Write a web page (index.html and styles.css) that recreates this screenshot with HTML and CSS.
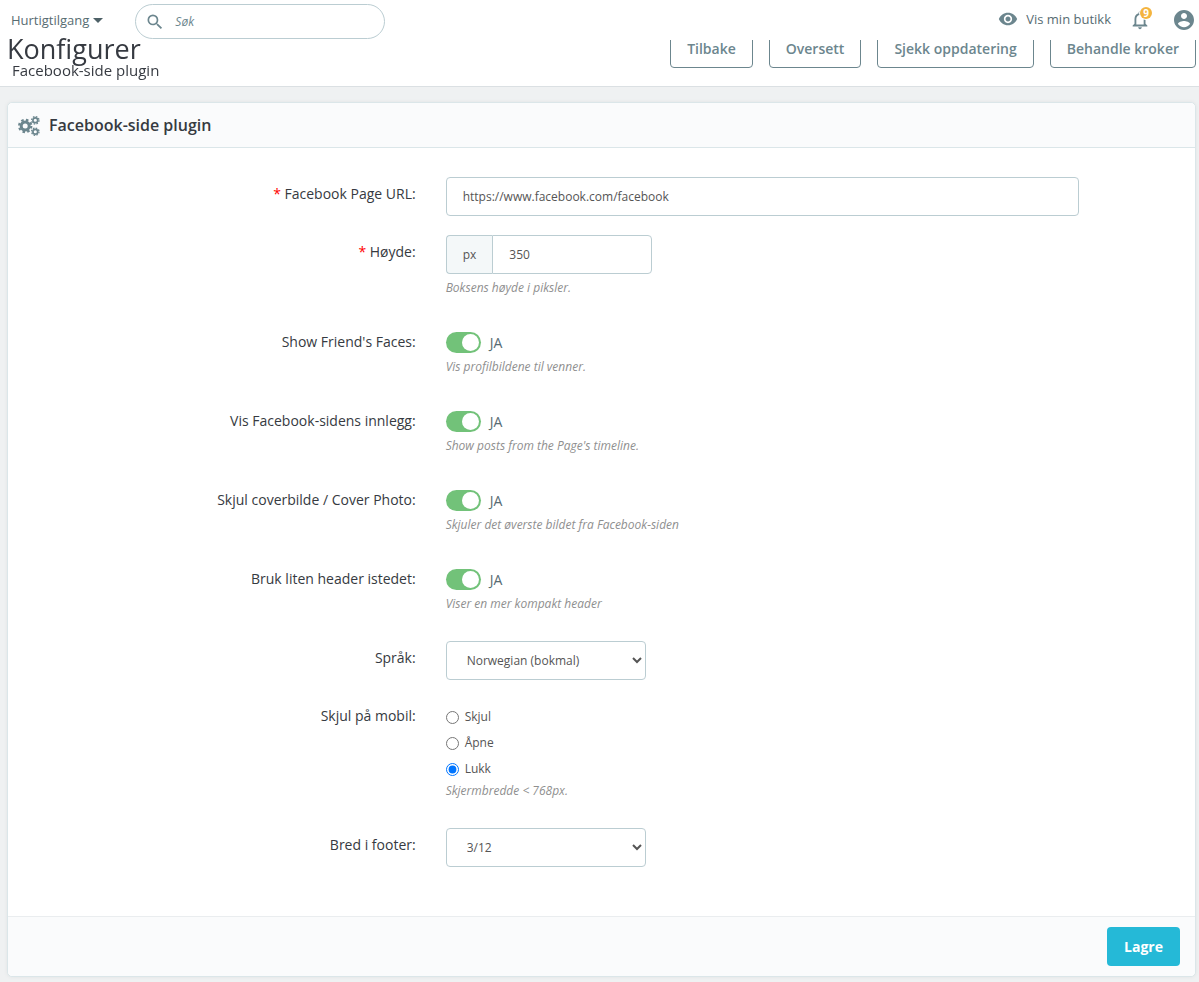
FILE: index.html
```html
<!DOCTYPE html>
<html lang="no">
<head>
  <meta charset="UTF-8">
  <meta name="viewport" content="width=device-width, initial-scale=1.0">
  <title>Konfigurer - Facebook-side plugin</title>
  <link rel="stylesheet" href="styles.css">
</head>
<body>
  <header class="topbar">
    <button type="button" class="quick-access">Hurtigtilgang <span class="caret"></span></button>
    <form class="search">
      <svg class="search-icon" viewBox="0 0 24 24"><path d="M15.5 14h-.79l-.28-.27A6.47 6.47 0 0 0 16 9.5 6.5 6.5 0 1 0 9.5 16c1.61 0 3.09-.59 4.23-1.57l.27.28v.79l5 4.99L20.49 19l-4.99-5zm-6 0C7.01 14 5 11.99 5 9.5S7.01 5 9.5 5 14 7.01 14 9.5 11.99 14 9.5 14z"/></svg>
      <input type="text" class="search-input" placeholder="Søk" aria-label="Søk">
    </form>
    <div class="topbar-right">
      <a class="shop-link" href="#">
        <svg class="icon-eye" viewBox="0 0 24 24"><path d="M12 4.5C7 4.5 2.73 7.61 1 12c1.73 4.39 6 7.5 11 7.5s9.27-3.11 11-7.5c-1.73-4.39-6-7.5-11-7.5zM12 17c-2.76 0-5-2.24-5-5s2.24-5 5-5 5 2.24 5 5-2.24 5-5 5zm0-8c-1.66 0-3 1.34-3 3s1.34 3 3 3 3-1.34 3-3-1.34-3-3-3z"/></svg>
        Vis min butikk
      </a>
      <button type="button" class="icon-button bell" aria-label="Varsler">
        <svg class="icon-bell" viewBox="0 0 24 24"><path d="M12 22c1.1 0 2-.9 2-2h-4c0 1.1.9 2 2 2zm6-6v-5c0-3.07-1.63-5.64-4.5-6.32V4c0-.83-.67-1.5-1.5-1.5s-1.5.67-1.5 1.5v.68C7.64 5.36 6 7.92 6 11v5l-2 2v1h16v-1l-2-2zm-2 1H8v-6c0-2.48 1.51-4.5 4-4.5s4 2.02 4 4.5v6z"/></svg>
        <span class="badge">9</span>
      </button>
      <button type="button" class="icon-button" aria-label="Konto">
        <svg class="icon-account" viewBox="0 0 24 24"><path d="M12 2C6.48 2 2 6.48 2 12s4.48 10 10 10 10-4.48 10-10S17.52 2 12 2zm0 3c1.66 0 3 1.34 3 3s-1.34 3-3 3-3-1.34-3-3 1.34-3 3-3zm0 14.2c-2.5 0-4.71-1.28-6-3.22.03-1.99 4-3.08 6-3.08 1.99 0 5.97 1.09 6 3.08-1.29 1.94-3.5 3.22-6 3.22z"/></svg>
      </button>
    </div>
  </header>

  <div class="page-head">
    <div class="page-titles">
      <h1 class="page-title">Konfigurer</h1>
      <h4 class="page-subtitle">Facebook-side plugin</h4>
    </div>
    <div class="page-actions">
      <a class="btn-outline" href="#">Tilbake</a>
      <a class="btn-outline" href="#">Oversett</a>
      <a class="btn-outline" href="#">Sjekk oppdatering</a>
      <a class="btn-outline" href="#">Behandle kroker</a>
    </div>
  </div>

  <main class="content">
    <form class="panel">
      <div class="panel-heading">
        <svg class="icon-cogs" viewBox="0 0 22 20">
          <g fill="none">
            <circle cx="7.2" cy="10" r="4" stroke-width="3"/>
            <circle cx="7.2" cy="10" r="6.1" stroke-width="2.2" stroke-dasharray="2.5 2.291"/>
            <circle cx="17.3" cy="4.3" r="2.4" stroke-width="1.7"/>
            <circle cx="17.3" cy="4.3" r="3.7" stroke-width="1.3" stroke-dasharray="1.6 1.306"/>
            <circle cx="17.3" cy="15.7" r="2.4" stroke-width="1.7"/>
            <circle cx="17.3" cy="15.7" r="3.7" stroke-width="1.3" stroke-dasharray="1.6 1.306"/>
          </g>
        </svg>
        Facebook-side plugin
      </div>

      <div class="panel-body">
        <div class="form-group">
          <label class="form-label" for="page-url"><span class="required">*</span> Facebook Page URL:</label>
          <div class="form-field">
            <input type="text" id="page-url" class="form-control" value="https://www.facebook.com/facebook">
          </div>
        </div>

        <div class="form-group">
          <label class="form-label" for="height"><span class="required">*</span> Høyde:</label>
          <div class="form-field">
            <div class="input-group">
              <span class="input-addon">px</span>
              <input type="text" id="height" class="form-control" value="350">
            </div>
            <p class="help-block">Boksens høyde i piksler.</p>
          </div>
        </div>

        <div class="form-group">
          <label class="form-label" for="faces">Show Friend's Faces:</label>
          <div class="form-field">
            <div class="switch-row"><input type="checkbox" id="faces" class="switch" checked><span>JA</span></div>
            <p class="help-block">Vis profilbildene til venner.</p>
          </div>
        </div>

        <div class="form-group">
          <label class="form-label" for="posts">Vis Facebook-sidens innlegg:</label>
          <div class="form-field">
            <div class="switch-row"><input type="checkbox" id="posts" class="switch" checked><span>JA</span></div>
            <p class="help-block">Show posts from the Page's timeline.</p>
          </div>
        </div>

        <div class="form-group">
          <label class="form-label" for="cover">Skjul coverbilde / Cover Photo:</label>
          <div class="form-field">
            <div class="switch-row"><input type="checkbox" id="cover" class="switch" checked><span>JA</span></div>
            <p class="help-block">Skjuler det øverste bildet fra Facebook-siden</p>
          </div>
        </div>

        <div class="form-group">
          <label class="form-label" for="small-header">Bruk liten header istedet:</label>
          <div class="form-field">
            <div class="switch-row"><input type="checkbox" id="small-header" class="switch" checked><span>JA</span></div>
            <p class="help-block">Viser en mer kompakt header</p>
          </div>
        </div>

        <div class="form-group">
          <label class="form-label" for="language">Språk:</label>
          <div class="form-field">
            <select id="language" class="form-control form-select">
              <option>Norwegian (bokmal)</option>
            </select>
          </div>
        </div>

        <div class="form-group" role="radiogroup" aria-labelledby="mobile-label">
          <span class="form-label" id="mobile-label">Skjul på mobil:</span>
          <div class="form-field">
            <label class="radio"><input type="radio" name="mobile" value="hide">Skjul</label>
            <label class="radio"><input type="radio" name="mobile" value="open">Åpne</label>
            <label class="radio"><input type="radio" name="mobile" value="close" checked>Lukk</label>
            <p class="help-block">Skjermbredde &lt; 768px.</p>
          </div>
        </div>

        <div class="form-group">
          <label class="form-label" for="footer-width">Bred i footer:</label>
          <div class="form-field">
            <select id="footer-width" class="form-control form-select">
              <option>3/12</option>
            </select>
          </div>
        </div>
      </div>

      <div class="panel-footer">
        <button type="submit" class="btn-primary">Lagre</button>
      </div>
    </form>
  </main>
</body>
</html>
```
FILE: styles.css
```css
* {
  box-sizing: border-box;
}
body {
  margin: 0;
  background: #eff1f2;
  color: #363a41;
  font-family: "Open Sans", sans-serif;
  font-size: 14px;
}
button, input, select {
  font-family: inherit;
}
svg {
  fill: #6c868e;
}

/* top bar, stays above the page head */
.topbar {
  position: fixed;
  top: 0;
  left: 0;
  right: 0;
  z-index: 10;
  display: flex;
  align-items: center;
  height: 40px;
  padding: 0 3px 0 11px;
  background: #fff;
}
.quick-access {
  display: flex;
  align-items: center;
  gap: 4px;
  padding: 0;
  border: none;
  background: none;
  color: #576c72;
  font-size: 13px;
  cursor: pointer;
}
.caret {
  border: 5px solid transparent;
  border-top-color: #4e6167;
  border-bottom: 0;
}
.search {
  display: flex;
  align-items: center;
  gap: 10px;
  width: 250px;
  height: 35px;
  margin: 3px 0 0 32px;
  padding: 0 9px;
  background: #fff;
  border: 1px solid #bbcdd2;
  border-radius: 18px;
}
.search-icon {
  width: 20px;
  height: 20px;
}
.search-input {
  flex: 1;
  min-width: 0;
  padding: 0;
  border: none;
  outline: none;
  background: none;
  font-size: 12px;
}
.search-input::placeholder {
  color: #6c868e;
  font-style: italic;
}
.topbar-right {
  display: flex;
  align-items: center;
  gap: 18px;
  margin-left: auto;
}
.shop-link {
  display: flex;
  align-items: center;
  gap: 8px;
  padding-bottom: 2px;
  color: #576c72;
  font-size: 13px;
  text-decoration: none;
}
.icon-eye {
  width: 20px;
  height: 20px;
}
.icon-button {
  display: flex;
  position: relative;
  padding: 0;
  border: none;
  background: none;
  cursor: pointer;
}
.bell {
  margin-right: 3px;
}
.icon-bell {
  width: 22px;
  height: 22px;
}
.icon-account {
  width: 24px;
  height: 24px;
}
.badge {
  position: absolute;
  top: -2px;
  right: -1px;
  width: 12px;
  height: 12px;
  border-radius: 50%;
  background: #f4b43f;
  box-shadow: 0 0 0 1px #fff;
  color: #fff;
  font-size: 10px;
  font-weight: 700;
  line-height: 12px;
  text-align: center;
}

/* page head */
.page-head {
  display: flex;
  justify-content: space-between;
  height: 87px;
  padding: 29px 3px 0 7px;
  background: #fff;
  border-bottom: 1px solid #dbe0e3;
}
.page-titles {
  position: relative;
  z-index: 11;
  padding-top: 6px;
}
.page-title {
  margin: 0;
  font-size: 27px;
  font-weight: 400;
  line-height: 28px;
}
.page-subtitle {
  margin: 0 0 0 5px;
  font-size: 15px;
  font-weight: 400;
  line-height: 14px;
}
.page-actions {
  display: flex;
  gap: 16px;
}
.btn-outline {
  height: 39px;
  padding: 0 16px;
  border: 1px solid #6c868e;
  border-radius: 4px;
  color: #6c868e;
  font-size: 14px;
  font-weight: 600;
  line-height: 37px;
  text-decoration: none;
}

/* panel */
.content {
  padding: 15px 3px 5px 7px;
}
.panel {
  background: #fff;
  border: 1px solid #dbe6e9;
  border-radius: 5px;
  box-shadow: 0 0 4px rgba(0, 0, 0, 0.06);
}
.panel-heading {
  display: flex;
  align-items: center;
  gap: 9px;
  height: 45px;
  padding: 0 10px;
  background: #fafbfc;
  border-bottom: 1px solid #dbe6e9;
  border-radius: 5px 5px 0 0;
  font-size: 16px;
  font-weight: 600;
}
.icon-cogs {
  width: 22px;
  height: 20px;
  margin-top: 2px;
  stroke: #6c868e;
}
.panel-body {
  padding: 29px 101px 49px 91px;
}
.form-group {
  display: grid;
  grid-template-columns: 1fr 2fr;
  margin-bottom: 19px;
}
.form-group:last-child {
  margin-bottom: 0;
}
.form-label {
  padding: 7px 15px 0;
  line-height: 20px;
  text-align: right;
}
.required {
  color: #f00;
}
.form-field {
  padding: 0 15px;
}
.form-control {
  display: block;
  width: 100%;
  height: 39px;
  padding: 0 16px;
  background: #fff;
  border: 1px solid #bbcdd2;
  border-radius: 4px;
  color: #555;
  font-size: 12px;
}
.form-select {
  width: 200px;
  padding: 0 0 0 16px;
}
.input-group {
  display: flex;
  width: 206px;
}
.input-group .form-control {
  border-radius: 0 4px 4px 0;
}
.input-addon {
  padding: 0 16px;
  background: #f4f8f9;
  border: 1px solid #bbcdd2;
  border-right: none;
  border-radius: 4px 0 0 4px;
  color: #555;
  font-size: 12px;
  line-height: 37px;
}
.help-block {
  margin: 6px 0 10px;
  color: #8f8f8f;
  font-size: 12px;
  font-style: italic;
  line-height: 16px;
}
.switch-row {
  display: flex;
  align-items: center;
  gap: 9px;
  height: 28px;
  padding-top: 7px;
  color: #576c72;
}
.switch {
  appearance: none;
  display: flex;
  width: 35px;
  height: 21px;
  margin: 0;
  padding: 2px;
  border-radius: 11px;
  background: #bbcdd2;
  cursor: pointer;
}
.switch::before {
  content: "";
  width: 17px;
  height: 17px;
  border-radius: 50%;
  background: #fff;
}
.switch:checked {
  justify-content: flex-end;
  background: #72c279;
}
.radio {
  display: flex;
  align-items: center;
  gap: 6px;
  padding-top: 10px;
  color: #555;
  font-size: 12px;
  line-height: 16px;
}
.radio input {
  width: 13px;
  height: 13px;
  margin: 0;
}
.panel-footer {
  display: flex;
  justify-content: flex-end;
  padding: 10px 15px;
  background: #fafbfc;
  border-top: 1px solid #eaedef;
  border-radius: 0 0 5px 5px;
}
.btn-primary {
  height: 39px;
  padding: 0 17px;
  border: none;
  border-radius: 4px;
  background: #25b9d7;
  color: #fff;
  font-size: 14px;
  font-weight: 700;
  cursor: pointer;
}
```
